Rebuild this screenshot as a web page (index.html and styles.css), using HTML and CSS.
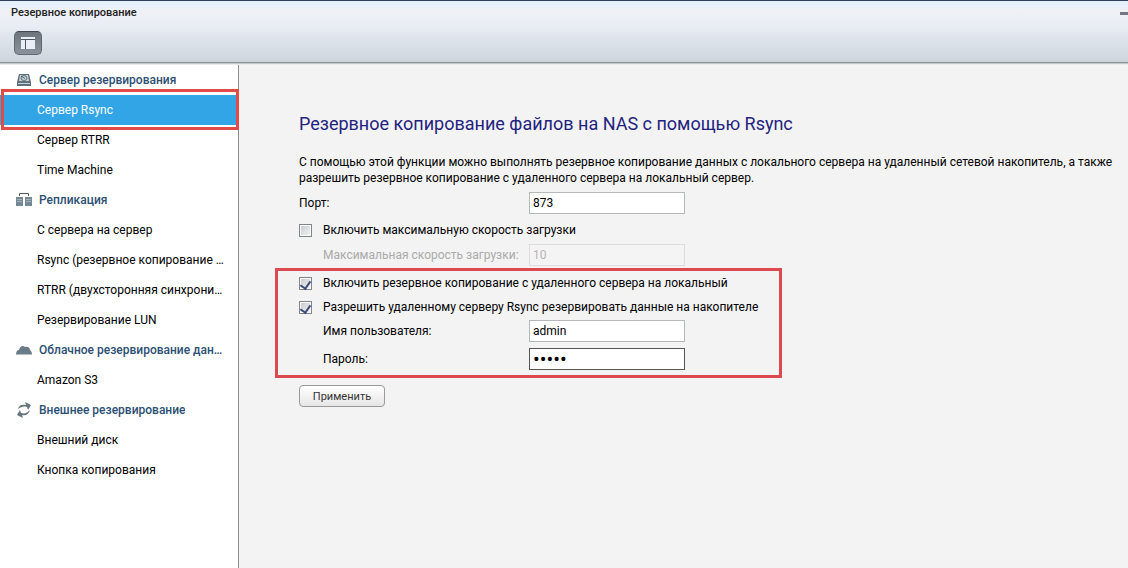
FILE: index.html
```html
<!DOCTYPE html>
<html lang="ru">
<head>
<meta charset="utf-8">
<title>Резервное копирование</title>
<link rel="stylesheet" href="styles.css">
</head>
<body class="window">
<header class="topbar">
  <div class="titlebar">
    <h1 class="window-title">Резервное копирование</h1>
    <button class="minimize" type="button" aria-label="Свернуть"></button>
  </div>
  <button class="panel-toggle" type="button" aria-label="Боковая панель">
    <svg width="14" height="13" viewBox="0 0 14 13"><path fill="#e9eff4" d="M0 0h14v2H0zM0 3h4v9H0zM5 3h9v9H5z"/><path fill="#4f565d" d="M0 2h14v1H0zM4 3h1v9H4z"/></svg>
  </button>
</header>
<div class="workspace">
  <nav class="sidebar">
    <h2 class="group-title">
      <svg class="icon" width="16" height="14" viewBox="0 0 16 14"><path fill="#62727c" d="M3 1h10l2 8v4H1V9z"/><path fill="#c7d2d8" d="M4 2h8l1 6H3zM2 10h12v1H2z"/><ellipse cx="8" cy="5" rx="3" ry="2.500" fill="none" stroke="#62727c"/><path fill="none" stroke="#506069" d="M5 3l4 2.500"/></svg>
      <span class="label">Сервер резервирования</span>
    </h2>
    <div class="marked"><a class="item active" href="#rsync">Сервер Rsync</a></div>
    <a class="item" href="#rtrr">Сервер RTRR</a>
    <a class="item" href="#tm">Time Machine</a>
    <h2 class="group-title">
      <svg class="icon" width="16" height="14" viewBox="0 0 16 14"><path fill="none" stroke="#4c555b" d="M3.500 3V.5h9V3"/><path fill="#748893" d="M0 4h7v9H0zM9 4h7v9H9z"/><path stroke="#a3b3bc" d="M1 6.500h5M10 6.500h5M1 8.500h5M10 8.500h5"/></svg>
      <span class="label">Репликация</span>
    </h2>
    <a class="item" href="#s2s">С сервера на сервер</a>
    <a class="item" href="#rsync-copy">Rsync (резервное копирование данных)</a>
    <a class="item" href="#rtrr-sync">RTRR (двухсторонняя синхронизация)</a>
    <a class="item" href="#lun">Резервирование LUN</a>
    <h2 class="group-title">
      <svg class="icon" width="16" height="14" viewBox="0 0 16 14"><path fill="#687b87" d="M0 11.500C0 9 1 7 3 7c1-4 4-5 6-3 3-1 5 1 5 3 1.500 1 2 3 2 4.500z"/></svg>
      <span class="label">Облачное резервирование данных</span>
    </h2>
    <a class="item" href="#s3">Amazon S3</a>
    <h2 class="group-title">
      <svg class="icon" width="16" height="16" viewBox="0 0 16 16"><path fill="#66747c" d="M2 7c1-4 4-5 8-4L9 0l6 3-3 5-1-3C7 4 5 5 2 7zM14 8c-1 4-4 6-8 5l1 3-6-3 3-5 1 3c4 1 6 0 9-3z"/></svg>
      <span class="label">Внешнее резервирование</span>
    </h2>
    <a class="item" href="#disk">Внешний диск</a>
    <a class="item" href="#button">Кнопка копирования</a>
  </nav>
  <main class="content">
    <h2 class="page-title">Резервное копирование файлов на NAS с помощью Rsync</h2>
    <p class="intro">С помощью этой функции можно выполнять резервное копирование данных с локального сервера на удаленный сетевой накопитель, а также разрешить резервное копирование с удаленного сервера на локальный сервер.</p>
    <form class="form">
      <div class="row">
        <label class="name" for="port">Порт:</label>
        <input class="field" id="port" type="text" value="873">
      </div>
      <div class="check-row">
        <input class="check" id="limit" type="checkbox">
        <label for="limit">Включить максимальную скорость загрузки</label>
      </div>
      <div class="row sub disabled">
        <label class="name" for="speed">Максимальная скорость загрузки:</label>
        <input class="field" id="speed" type="text" value="10" disabled>
      </div>
      <div class="remote">
        <div class="check-row">
          <input class="check" id="remote" type="checkbox" checked>
          <label for="remote">Включить резервное копирование с удаленного сервера на локальный</label>
        </div>
        <div class="check-row">
          <input class="check" id="allow" type="checkbox" checked>
          <label for="allow">Разрешить удаленному серверу Rsync резервировать данные на накопителе</label>
        </div>
        <div class="row sub">
          <label class="name" for="user">Имя пользователя:</label>
          <input class="field" id="user" type="text" value="admin">
        </div>
        <div class="row sub">
          <label class="name" for="pass">Пароль:</label>
          <input class="field current" id="pass" type="password" value="admin">
        </div>
      </div>
      <button class="apply" type="button">Применить</button>
    </form>
  </main>
</div>
</body>
</html>
```
FILE: styles.css
```css
* {
  box-sizing: border-box;
}

.window {
  display: flex;
  flex-direction: column;
  min-height: 100vh;
  margin: 0;
  background: #f3f3f3;
  color: #000;
  font: 12px/16px Roboto, "Noto Sans", sans-serif;
}

.topbar {
  padding-bottom: 7px;
  border-top: 1px solid #343c62;
  border-bottom: 1px solid #87929a;
  background: linear-gradient(#e4f1ff 0, #eff1f6 10px, #e9edf4 24px, #cdd5dc);
  box-shadow: 0 1px 1px #c3c9ca;
}

.titlebar {
  display: flex;
  align-items: center;
  justify-content: space-between;
  height: 24px;
  padding-left: 11px;
}

.window-title {
  margin: 0;
  color: #222;
  font-size: 11px;
  font-weight: 500;
}

.minimize {
  width: 8px;
  height: 3px;
  padding: 0;
  border: 0;
  background: #747782;
}

.panel-toggle {
  display: flex;
  align-items: center;
  justify-content: center;
  width: 28px;
  height: 24px;
  margin: 6px 0 0 14px;
  padding: 0;
  border: 1px solid #61686f;
  border-top-color: #414951;
  border-radius: 5px;
  background: linear-gradient(#6c747d, #8a929b);
}

.workspace {
  display: flex;
  flex: 1;
  margin-top: 2px;
}

.sidebar {
  flex: none;
  width: 239px;
  border-right: 1px solid #8e8e8e;
  background: #fff;
}

.group-title {
  display: flex;
  align-items: center;
  gap: 7px;
  height: 30px;
  margin: 0;
  padding: 0 14px 0 16px;
  color: #2c4f74;
  font-size: 12px;
  font-weight: 500;
}

.icon {
  flex: none;
}

.label {
  overflow: hidden;
  text-overflow: ellipsis;
  white-space: nowrap;
}

.item {
  display: block;
  overflow: hidden;
  padding: 0 14px 0 37px;
  color: #000;
  line-height: 30px;
  text-decoration: none;
  text-overflow: ellipsis;
  white-space: nowrap;
}

.active {
  background: #32a5e7;
  color: #fff;
}

.marked {
  position: relative;
}

.marked::after {
  position: absolute;
  inset: -6px -1px -5px 1px;
  border: 3px solid #e04b45;
  content: "";
  pointer-events: none;
}

.content {
  flex: 1;
  min-width: 0;
  padding: 47px 12px 20px 60px;
}

.page-title {
  margin: 0;
  color: #23237f;
  font-size: 18px;
  font-weight: 400;
  line-height: 24px;
}

.intro {
  margin: 18px 0 6px;
}

.row {
  display: flex;
  align-items: center;
  margin-bottom: 6px;
}

.name {
  width: 230px;
}

.sub {
  padding-left: 24px;
}

.sub .name {
  width: 206px;
}

.disabled {
  margin-bottom: 2px;
  color: #aaa;
}

.field {
  width: 156px;
  height: 22px;
  padding: 0 3px;
  border: 1px solid #b5b8bb;
  outline: 0;
  background: #fff;
  color: #000;
  font: inherit;
}

.field:disabled {
  border-color: #ddd;
  background: #f5f4f5;
  color: #b5b5b5;
}

.current {
  border-color: #555;
  font-size: 20px;
}

.check-row {
  display: flex;
  align-items: center;
  gap: 11px;
  margin: 8px 0 6px;
}

.check {
  width: 13px;
  height: 13px;
  margin: 0;
  border: 1px solid #82858b;
  outline: 1px solid #f9f9f9;
  outline-offset: -2px;
  background: linear-gradient(135deg, #c5c8cc, #f6f6f6);
  appearance: none;
}

.check:checked::before {
  display: block;
  width: 5px;
  height: 8px;
  margin: 1px auto 0;
  border: solid #3b4b7c;
  border-width: 0 2px 2px 0;
  content: "";
  transform: rotate(35deg);
}

.remote {
  width: fit-content;
  margin-left: -24px;
  padding: 4px 21px 5px;
  border: 3px solid #dc4a50;
}

.remote .check-row {
  margin: 0 0 8px;
}

.remote .check-row + .row {
  margin-top: -3px;
}

.remote .row:last-child {
  margin-bottom: 0;
}

.apply {
  display: block;
  width: 86px;
  height: 22px;
  margin-top: 7px;
  padding: 0;
  border: 1px solid #999;
  border-radius: 4px;
  background: linear-gradient(#fff, #e6e6e6);
  color: #333;
  font: 11px Roboto, "Noto Sans", sans-serif;
}
```
